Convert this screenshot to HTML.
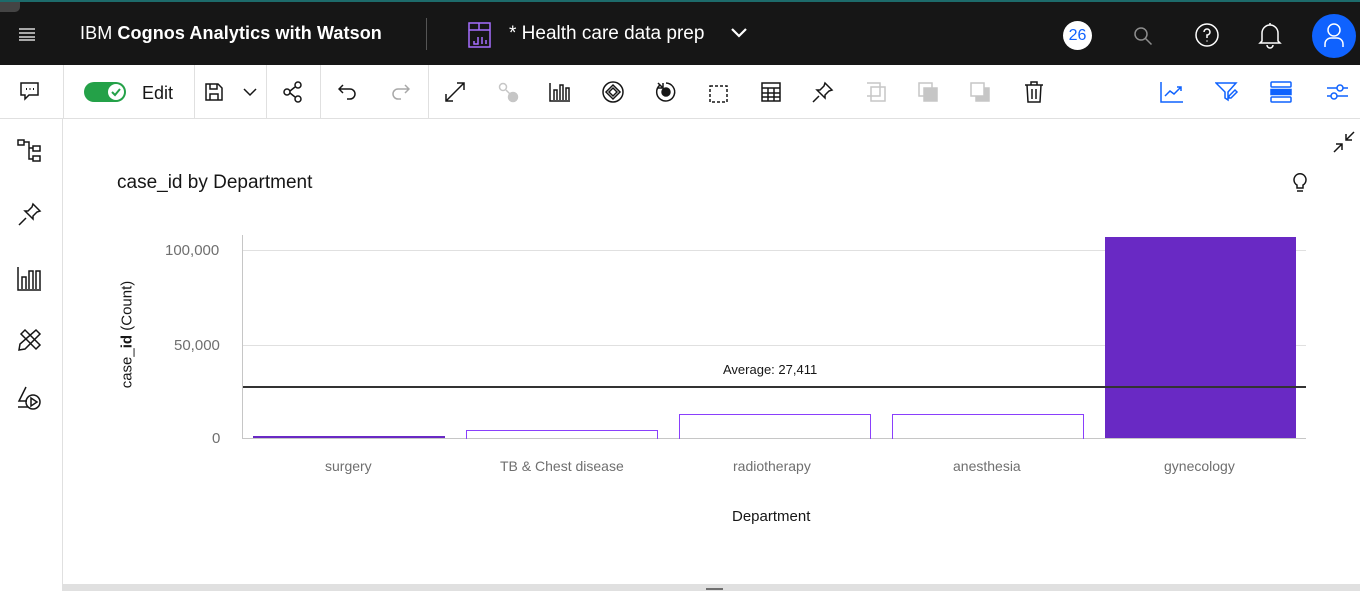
<!DOCTYPE html>
<html><head><style>
*{margin:0;padding:0;box-sizing:border-box}
body{width:1360px;height:591px;overflow:hidden;background:#fff;font-family:"Liberation Sans",sans-serif;position:relative}
.hdr{position:absolute;left:0;top:0;width:1360px;height:65px;background:#161616;border-top:2px solid #1d6b6b}
.a{position:absolute}
.tb{position:absolute;top:65px;left:0;width:1360px;height:54px;border-bottom:1px solid #e0e0e0;background:#fff}
.sep{position:absolute;top:0;width:1px;height:54px;background:#e0e0e0}
svg.i{position:absolute;fill:none;stroke:#161616;stroke-width:1.5}
.t{position:absolute;white-space:nowrap}
</style></head><body>
<div class="hdr">
 <div class="a" style="left:0;top:0;width:20px;height:10px;background:#444;border-radius:0 0 5px 0"></div>
 <svg class="i" style="left:18px;top:24px;stroke:#fff" width="18" height="16"><path d="M1 3h16M1 7h16M1 11h16M1 14h16" stroke-width="1.3"/></svg>
 <div class="t" style="left:80px;top:21px;color:#fff;font-size:18px;letter-spacing:0.1px">IBM <b>Cognos Analytics with Watson</b></div>
 <div class="a" style="left:426px;top:16px;width:1px;height:32px;background:#555"></div>
 <svg class="i" style="left:468px;top:20px;stroke:#a56eff" width="24" height="26"><rect x="1" y="1" width="21" height="24"/><path d="M1 8h21M11 1v7M6 19v3h4v-7M14 15v7M18 18v4"/></svg>
 <div class="t" style="left:509px;top:21px;color:#fff;font-size:19px">* Health care data prep</div>
 <svg class="i" style="left:730px;top:25px;stroke:#fff;stroke-width:2.2" width="18" height="12"><path d="M2 2l7 7 7-7"/></svg>
 <div class="a" style="left:1063px;top:19px;width:29px;height:29px;border-radius:50%;background:#fff;color:#0f62fe;font-size:16px;text-align:center;line-height:29px">26</div>
 <svg class="i" style="left:1133px;top:24px;stroke:#8d8d8d" width="20" height="20"><circle cx="8" cy="8" r="6"/><path d="M12.5 12.5l6 6"/></svg>
 <svg class="i" style="left:1194px;top:20px;stroke:#fff" width="26" height="26"><circle cx="13" cy="13" r="11"/><path d="M10 10a3 3 0 1 1 3 3v3M13 18.5v1"/></svg>
 <svg class="i" style="left:1257px;top:19px;stroke:#fff" width="26" height="28"><path d="M5 20V12a8 8 0 0 1 16 0v8l2 2H3zM10 24a3 3 0 0 0 6 0M13 2v2"/></svg>
 <div class="a" style="left:1312px;top:12px;width:44px;height:44px;border-radius:50%;background:#0f62fe"></div>
 <svg class="i" style="left:1320px;top:18px;stroke:#fff" width="28" height="30"><circle cx="14" cy="10" r="6"/><path d="M5 27v-3a6 6 0 0 1 6-6h6a6 6 0 0 1 6 6v3"/></svg>
</div>
<div class="tb">
 <svg class="i" style="left:20px;top:17px" width="20" height="20"><path d="M1 1h17v12H9l-4 4v-4H1z"/><path d="M6 7h1M9.5 7h1M13 7h1" stroke-width="2"/></svg>
 <div class="sep" style="left:63px"></div>
 <div class="a" style="left:84px;top:17px;width:42px;height:20px;border-radius:10px;background:#24a148"></div>
 <div class="a" style="left:108px;top:19px;width:16px;height:16px;border-radius:50%;background:#fff"></div>
 <svg class="i" style="left:110px;top:21px;stroke:#24a148;stroke-width:2" width="12" height="12"><path d="M2 6l3 3 5-6"/></svg>
 <div class="t" style="left:142px;top:18px;font-size:18px;color:#161616">Edit</div>
 <div class="sep" style="left:194px"></div>
 <svg class="i" style="left:205px;top:18px" width="18" height="18"><path d="M1 1h12l4 4v12H1zM5 1v5h7V1M5 17v-6h8v6"/></svg>
 <svg class="i" style="left:242px;top:22px" width="16" height="10"><path d="M2 2l6 6 6-6"/></svg>
 <div class="sep" style="left:266px"></div>
 <svg class="i" style="left:283px;top:16px" width="20" height="22"><circle cx="15" cy="4" r="3"/><circle cx="4" cy="11" r="3"/><circle cx="15" cy="18" r="3"/><path d="M7 10l5-4M7 12l5 4"/></svg>
 <div class="sep" style="left:320px"></div>
 <svg class="i" style="left:338px;top:19px" width="20" height="16"><path d="M5 1L1 5l4 4M1 5h11a5 5 0 0 1 0 10H9"/></svg>
 <svg class="i" style="left:390px;top:19px;stroke:#a8a8a8" width="20" height="16"><path d="M15 1l4 4-4 4M19 5H8a5 5 0 0 0 0 10h3"/></svg>
 <div class="sep" style="left:428px"></div>
 <svg class="i" style="left:444px;top:16px" width="22" height="22"><path d="M2 20L20 2M13 2h7v7M2 13v7h7"/></svg>
 <svg class="i" style="left:498px;top:17px;stroke:#c6c6c6" width="22" height="22"><circle cx="5" cy="5" r="3.5"/><path d="M8 8l5 5"/><circle cx="15" cy="15" r="4.5" fill="#c6c6c6"/></svg>
 <svg class="i" style="left:549px;top:17px" width="22" height="20"><path d="M1 1v18h20M5 18V8h3v10M11 18V3h3v15M17 18V6h3v12"/></svg>
 <svg class="i" style="left:601px;top:15px" width="24" height="24"><circle cx="12" cy="12" r="10"/><path d="M12 5l7 7-7 7-7-7z"/><path d="M12 8l4 4-4 4-4-4z"/></svg>
 <svg class="i" style="left:655px;top:16px" width="22" height="22"><path d="M5 4a9 9 0 1 0 6-2"/><circle cx="11" cy="11" r="4" fill="#161616"/><path d="M3 2l5 5M3 7h5V2"/></svg>
 <svg class="i" style="left:708px;top:17px;stroke-dasharray:3 2" width="22" height="22"><rect x="2" y="4" width="17" height="16"/></svg>
 <svg class="i" style="left:761px;top:17px" width="20" height="20"><rect x="1" y="1" width="18" height="18"/><path d="M1 6h18M1 11h18M1 15h18M7 6v13M13 6v13"/></svg>
 <svg class="i" style="left:812px;top:16px" width="22" height="22"><path d="M13 2l7 7-3 1-4 4 0 3-8-8 3 0 4-4zM7 15l-6 6"/></svg>
 <svg class="i" style="left:866px;top:17px;stroke:#c6c6c6" width="22" height="22"><path d="M1 1h13v13H1"/><rect x="5" y="5" width="14" height="14"/></svg>
 <svg class="i" style="left:918px;top:17px;stroke:#c6c6c6" width="22" height="22"><rect x="1" y="1" width="13" height="13"/><rect x="6" y="6" width="13" height="13" fill="#c6c6c6"/></svg>
 <svg class="i" style="left:970px;top:17px;stroke:#c6c6c6" width="22" height="22"><rect x="6" y="6" width="13" height="13" fill="#c6c6c6"/><rect x="1" y="1" width="13" height="13" fill="#fff"/></svg>
 <svg class="i" style="left:1024px;top:15px" width="20" height="24"><path d="M1 5h18M7 5V2h6v3M3 5l1 17h12l1-17M8 9v10M12 9v10"/></svg>
 <svg class="i" style="left:1160px;top:16px;stroke:#0f62fe" width="24" height="22"><path d="M1 1v20h22M5 15l5-5 4 3 7-7M17 6h4v4"/></svg>
 <svg class="i" style="left:1215px;top:16px;stroke:#0f62fe" width="24" height="22"><path d="M1 2h20l-8 9v8l-3-2v-6z"/><path d="M20 9l-6 6v2h2l6-6z"/></svg>
 <svg class="i" style="left:1270px;top:16px;stroke:#0f62fe" width="22" height="22"><rect x="1" y="1" width="20" height="5" rx="1"/><rect x="1" y="8.5" width="20" height="5" fill="#0f62fe"/><rect x="1" y="16" width="20" height="5" rx="1"/></svg>
 <svg class="i" style="left:1326px;top:17px;stroke:#0f62fe" width="22" height="20"><path d="M1 6h21M1 14h21"/><circle cx="14" cy="6" r="3" fill="#fff"/><circle cx="8" cy="14" r="3" fill="#fff"/></svg>
</div>
<div class="a" style="left:62px;top:119px;width:1px;height:472px;background:#e0e0e0"></div>
<svg class="i" style="left:17px;top:139px" width="26" height="26"><rect x="1" y="1" width="6" height="5"/><rect x="16" y="7" width="7" height="5"/><rect x="16" y="17" width="7" height="5"/><path d="M7 3h5v17h4M12 9h4"/></svg>
<svg class="i" style="left:17px;top:202px" width="26" height="26"><path d="M16 2l7 7-3 1-4 4 0 3-8-8 3 0 4-4zM9 16l-7 7"/></svg>
<svg class="i" style="left:17px;top:266px" width="26" height="26"><path d="M1 1v23h23M5 23V11h4v12M12 23V5h4v18M19 23V5h4v18"/></svg>
<svg class="i" style="left:17px;top:326px" width="26" height="26"><path d="M4 8l4-4 15 15-4 4zM19 4l4 4L8 23l-6 1 1-6z"/></svg>
<svg class="i" style="left:17px;top:385px" width="26" height="26"><path d="M9 2L2 16h8M1 22h10"/><circle cx="16" cy="17" r="7"/><path d="M14 13v8l6-4z"/></svg>
<svg class="i" style="left:1332px;top:130px" width="24" height="24"><path d="M22 2l-8 8M14 4v6h6M2 22l8-8M10 20v-6H4"/></svg>
<div class="t" style="left:117px;top:172px;font-size:19px;color:#161616">case_id by Department</div>
<svg class="i" style="left:1292px;top:172px" width="16" height="22"><path d="M5 13a6 6 0 1 1 6 0v3H5zM5 19h6"/></svg>
<div class="a" style="left:242px;top:235px;width:1px;height:204px;background:#c6c6c6"></div>
<div class="a" style="left:243px;top:250px;width:1063px;height:1px;background:#e0e0e0"></div>
<div class="a" style="left:243px;top:345px;width:1063px;height:1px;background:#e0e0e0"></div>
<div class="a" style="left:243px;top:438px;width:1063px;height:1px;background:#c6c6c6"></div>
<div class="t" style="left:165px;top:242px;font-size:15px;color:#6f6f6f">100,000</div>
<div class="t" style="left:174px;top:337px;font-size:15px;color:#6f6f6f">50,000</div>
<div class="t" style="left:212px;top:430px;font-size:15px;color:#6f6f6f">0</div>
<div class="t" style="left:62px;top:326px;font-size:15px;color:#161616;transform:rotate(-90deg);transform-origin:center;width:130px;text-align:center">case_<b>id</b> (Count)</div>
<div class="a" style="left:253px;top:436px;width:192px;height:2px;border:1px solid #6929c4;background:#fff"></div>
<div class="a" style="left:466px;top:430px;width:192px;height:9px;border:1.5px solid #8a3ffc;border-bottom:none"></div>
<div class="a" style="left:679px;top:414px;width:192px;height:25px;border:1.5px solid #8a3ffc;border-bottom:none"></div>
<div class="a" style="left:892px;top:414px;width:192px;height:25px;border:1.5px solid #8a3ffc;border-bottom:none"></div>
<div class="a" style="left:1105px;top:237px;width:191px;height:201px;background:#6929c4"></div>
<div class="a" style="left:243px;top:386px;width:1063px;height:1.5px;background:#333"></div>
<div class="t" style="left:723px;top:362px;font-size:13px;color:#161616">Average: 27,411</div>
<div class="t" style="left:325px;top:458px;font-size:14px;color:#6f6f6f">surgery</div>
<div class="t" style="left:500px;top:458px;font-size:14px;color:#6f6f6f">TB &amp; Chest disease</div>
<div class="t" style="left:733px;top:458px;font-size:14px;color:#6f6f6f">radiotherapy</div>
<div class="t" style="left:953px;top:458px;font-size:14px;color:#6f6f6f">anesthesia</div>
<div class="t" style="left:1164px;top:458px;font-size:14px;color:#6f6f6f">gynecology</div>
<div class="t" style="left:732px;top:508px;font-size:15px;color:#161616">Department</div>
<div class="a" style="left:63px;top:584px;width:1297px;height:7px;background:#e0e0e0"></div>
<div class="a" style="left:706px;top:588px;width:17px;height:2px;background:#6f6f6f"></div>
</body></html>
